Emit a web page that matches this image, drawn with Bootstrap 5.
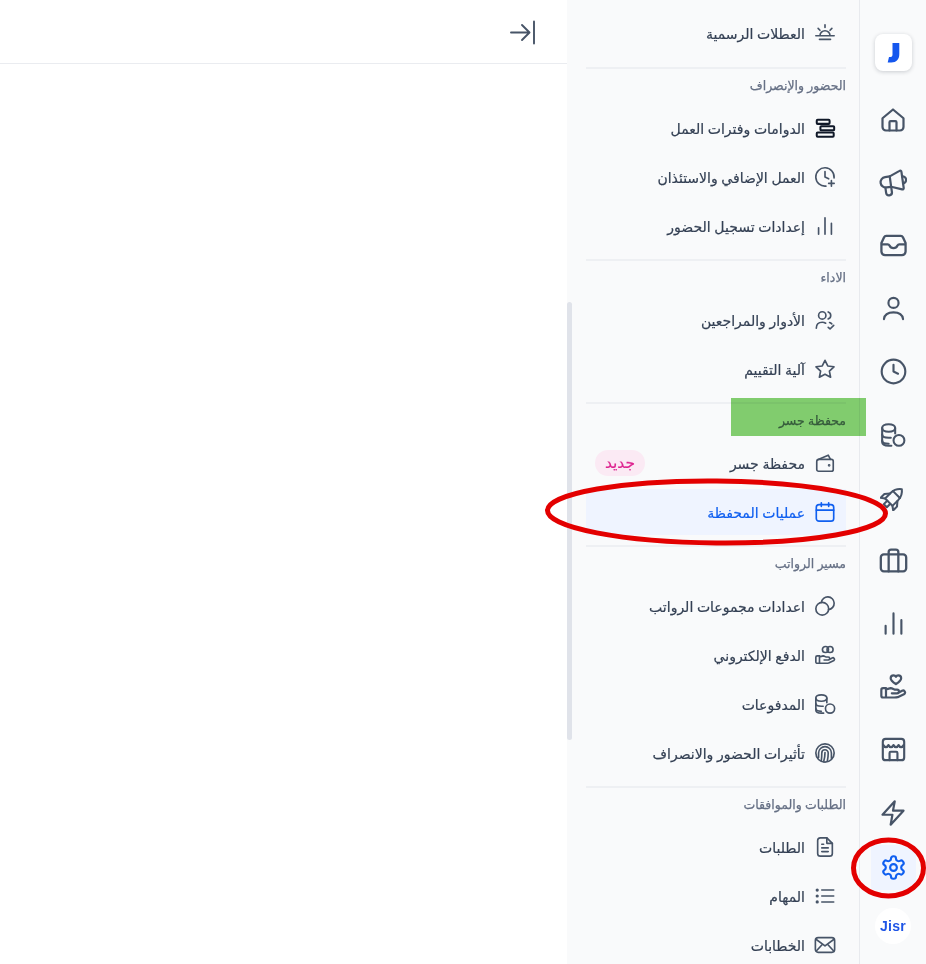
<!DOCTYPE html>
<html lang="ar" dir="rtl">
<head>
<meta charset="utf-8">
<title>الإعدادات</title>
<link href="https://cdn.jsdelivr.net/npm/bootstrap@5.3.0/dist/css/bootstrap.min.css" rel="stylesheet">
<style>
html,body{height:964px;overflow:hidden;background:#fff}
body{font-family:"Noto Sans","DejaVu Sans","Liberation Sans",sans-serif;color:#344054}
.stage{position:relative;width:926px;height:964px;overflow:hidden}
.ico{fill:none;stroke:currentColor;stroke-width:1.9;stroke-linecap:round;stroke-linejoin:round;flex:none}
.rail{width:67px;flex:none;background:#f9fafb;border-left:1px solid #e8eaee;color:#475467}
.rail-logo{width:37px;height:37px;margin-top:34px;margin-bottom:26px;background:#fff;border-radius:8px;box-shadow:0 1px 4px rgba(16,24,40,.2)}
.rail-list{gap:18px}
.rail-btn{width:45px;height:45px;color:#475467}
.rail-btn.on{background:#eff4ff;color:#0f5ff0;margin-top:-8px;border-radius:4px}
.rail-jisr{width:36px;height:36px;margin-top:18px;background:#fff;color:#1f55e6;font:800 14px/1 "Liberation Sans",sans-serif;letter-spacing:.3px}
.panel{width:292px;flex:none;background:#f9fafb;padding:10px 13px 0 19px;position:relative;overflow:hidden}
.thumb{position:absolute;left:0;top:302px;width:5px;height:438px;background:#e0e3ea;border-radius:3px}
.row-item{height:46px;margin-bottom:3px;padding:0 10px 0 9px;gap:9px;font-size:14px;color:#344054;-webkit-text-stroke:.2px currentColor}
.row-item .ico{stroke-width:1.8;color:#475467}
.row-item.on{background:#eff4ff;color:#0f5ff0}
.row-item.on .ico{color:#0f5ff0}
.row-item .ico.dark-ico{color:#101828;stroke-width:2.2}
.sep{height:2px;background:#eef0f3;margin:10px 0 0}
.sep.first-sep{margin-top:11px}
.sec-label{height:36px;font-size:12.5px;color:#667085;line-height:34px;-webkit-text-stroke:.25px currentColor}
.tag-new{width:50px;height:26px;background:#fbeaf4;color:#dd2590;font-size:15.5px;border-radius:13px}
.main-area{flex:1;min-width:0;background:#fff}
.topbar{height:64px;border-bottom:1px solid #eaecf0;color:#475467;padding-right:31px}
.mark-green{position:absolute;left:731px;top:398px;width:135px;height:38px;background:#84d070;mix-blend-mode:multiply}
.mark-ring{position:absolute;left:0;top:0;pointer-events:none}
</style>
</head>
<body>
<svg width="0" height="0" class="d-none">
<defs>
<symbol id="i-home" viewBox="0 0 24 24"><path d="M3 10.500 12 3l9 7.500V18a3 3 0 0 1-3 3H6a3 3 0 0 1-3-3z"/><path d="M9 21v-7a1 1 0 0 1 1-1h4a1 1 0 0 1 1 1v7"/></symbol>
<symbol id="i-mega" viewBox="0 0 24 24"><g transform="rotate(-8 12 12)"><path d="M10 6H6a4.500 4.500 0 0 0 0 9h4"/><path d="M10 6 19 2.500c.7-.3 1.500.2 1.500 1v14c0 .8-.8 1.300-1.500 1L10 15z"/><path d="M20.500 7.500a3 3 0 0 1 0 6M5 15v4.500a2.500 2.500 0 0 0 5 0V15"/></g></symbol>
<symbol id="i-inbox" viewBox="0 0 24 24"><path d="M6 4h12a2 2 0 0 1 1.800 1.100L22 10v7a3 3 0 0 1-3 3H5a3 3 0 0 1-3-3v-7l2.200-4.900A2 2 0 0 1 6 4z"/><path d="M2.500 11h4.700c.7 0 1.200.4 1.500 1a3.600 3.600 0 0 0 6.600 0c.3-.6.8-1 1.500-1h4.700"/></symbol>
<symbol id="i-user" viewBox="0 0 24 24"><circle cx="12" cy="7" r="4.500"/><path d="M3.500 21.500c.5-4 3-6 8.500-6s8 2 8.500 6"/></symbol>
<symbol id="i-clock" viewBox="0 0 24 24"><circle cx="12" cy="12" r="10.500"/><path d="M12 6v6l4 2"/></symbol>
<symbol id="i-coins" viewBox="0 0 24 24"><path d="M14 10.500V5.500C14 3.500 12 2 8 2S2 3.500 2 5.500v13C2 20.500 4 22 8 22h2.500"/><path d="M2 5.500C2 7.500 4 9 8 9s6-1.500 6-3.500M2 11.500c0 2 2 3 6 3h2M2 17c0 2 2 3 6 3"/><circle cx="17.500" cy="17" r="5"/></symbol>
<symbol id="i-rocket" viewBox="0 0 24 24"><g transform="rotate(45 12 12)"><path d="M12 .5c3.200 2.500 4.800 5.500 4.800 9.500v7.500H7.200V10C7.200 6 8.800 3 12 .5z"/><path d="M7.200 11 3.800 15v5l3.400-2.500M16.800 11l3.400 4v5l-3.400-2.500M10 17.500V22h4v-4.500M7.500 7.500h9"/></g></symbol>
<symbol id="i-case" viewBox="0 0 24 24"><rect x="1.500" y="7" width="21" height="14" rx="2.500"/><path d="M8 21V5a2 2 0 0 1 2-2h4a2 2 0 0 1 2 2v16"/></symbol>
<symbol id="i-bars" viewBox="0 0 24 24"><path d="M12 3v18M5 14v7M19 9v12"/></symbol>
<symbol id="i-hand" viewBox="0 0 24 24"><path d="M6 21H3.500A1.500 1.500 0 0 1 2 19.500v-5A1.500 1.500 0 0 1 3.500 13H6zM6 14l4-1c1.200 0 2.200.8 3.200 1.200h2.300a1.600 1.600 0 0 1 0 3.200H11m4.800 0 4-2.200a1.700 1.700 0 0 1 2 2.700L16 20.700c-1 .3-2 .3-3 .3H6"/><path d="M16.500 2c-1 0-1.700.5-2 1.200C14.200 2.500 13.500 2 12.500 2 11 2 10 3.100 10 4.500c0 2.100 2.500 3.700 4.500 5 2-1.300 4.500-2.900 4.500-5C19 3.100 18 2 16.500 2z"/></symbol>
<symbol id="i-pay" viewBox="0 0 24 24"><path d="M6 21H3.500A1.500 1.500 0 0 1 2 19.500v-5A1.500 1.500 0 0 1 3.500 13H6zM6 14l4-1c1.200 0 2.200.8 3.200 1.200h2.300a1.600 1.600 0 0 1 0 3.200H11m4.800 0 4-2.200a1.700 1.700 0 0 1 2 2.700L16 20.700c-1 .3-2 .3-3 .3H6"/><circle cx="12.500" cy="6" r="3.300"/><circle cx="17.500" cy="6" r="3.300"/></symbol>
<symbol id="i-store" viewBox="0 0 24 24"><rect x="2.500" y="2.500" width="19" height="19" rx="2.500"/><path d="M3 8c1 2.500 3.500 2.500 4.500 0 1 2.500 3.500 2.500 4.500 0 1 2.500 3.500 2.500 4.500 0 1 2.500 3.500 2.500 4.500 0M8.500 21.500V15a1 1 0 0 1 1-1h5a1 1 0 0 1 1 1v6.500"/></symbol>
<symbol id="i-bolt" viewBox="0 0 24 24"><path d="M13.500 2 3 13.500h8.500L10 22l11-12h-9z"/></symbol>
<symbol id="i-gear" viewBox="0 0 24 24"><path d="M12.220 2h-.44a2 2 0 0 0-2 2v.18a2 2 0 0 1-1 1.730l-.43.25a2 2 0 0 1-2 0l-.15-.08a2 2 0 0 0-2.730.73l-.22.38a2 2 0 0 0 .73 2.730l.15.1a2 2 0 0 1 1 1.720v.51a2 2 0 0 1-1 1.740l-.15.09a2 2 0 0 0-.73 2.730l.22.38a2 2 0 0 0 2.730.73l.15-.08a2 2 0 0 1 2 0l.43.25a2 2 0 0 1 1 1.730V20a2 2 0 0 0 2 2h.44a2 2 0 0 0 2-2v-.18a2 2 0 0 1 1-1.730l.43-.25a2 2 0 0 1 2 0l.15.08a2 2 0 0 0 2.730-.73l.22-.39a2 2 0 0 0-.73-2.730l-.15-.08a2 2 0 0 1-1-1.740v-.5a2 2 0 0 1 1-1.740l.15-.09a2 2 0 0 0 .73-2.730l-.22-.38a2 2 0 0 0-2.730-.73l-.15.08a2 2 0 0 1-2 0l-.43-.25a2 2 0 0 1-1-1.730V4a2 2 0 0 0-2-2z"/><circle cx="12" cy="12" r="3"/></symbol>
<symbol id="i-sun" viewBox="0 0 24 24"><path d="M6.500 15a5.500 5.500 0 0 1 11 0M2 15h20M6 19h12M12 3v3M4.500 7l2 2M19.500 7l-2 2"/></symbol>
<symbol id="i-shift" viewBox="0 0 24 24"><rect x="3" y="3" width="14" height="4.500" rx="1"/><rect x="7" y="10" width="15" height="4.500" rx="1"/><rect x="3" y="17" width="18.500" height="4.500" rx="1"/></symbol>
<symbol id="i-clockplus" viewBox="0 0 24 24"><path d="M13 21.900A10 10 0 1 1 21.900 13M12 6v6l4 2M19 16v6M16 19h6"/></symbol>
<symbol id="i-users" viewBox="0 0 24 24"><circle cx="9" cy="7" r="4"/><path d="M2.500 21c0-4 2.500-6.500 6.500-6.500 1.500 0 2.700.3 3.700 1M15.500 3.200a4 4 0 0 1 0 7.600M17 14.800c.9.300 1.700.8 2.400 1.400M15.500 20l2 1.800 4-4"/></symbol>
<symbol id="i-star" viewBox="0 0 24 24"><path d="m12 2.500 3 6.200 6.800.9-5 4.700 1.300 6.700-6.100-3.300-6.100 3.300 1.300-6.700-5-4.700 6.800-.9z"/></symbol>
<symbol id="i-wallet" viewBox="0 0 24 24"><path d="M4 8.500 15.500 3.500 18 8"/><path d="M3 10.500A2.500 2.500 0 0 1 5.500 8H19a2 2 0 0 1 2 2v9a2 2 0 0 1-2 2H5a2 2 0 0 1-2-2z"/><circle cx="16.500" cy="14.500" r=".6"/></symbol>
<symbol id="i-cal" viewBox="0 0 24 24"><rect x="2.500" y="4" width="19" height="18" rx="3"/><path d="M2.500 10h19M8 2v4M16 2v4"/></symbol>
<symbol id="i-rings" viewBox="0 0 24 24"><circle cx="9" cy="15" r="7"/><path d="M8.060 8.060A7 7 0 1 1 15.940 15.940"/></symbol>
<symbol id="i-finger" viewBox="0 0 24 24"><circle cx="12" cy="12" r="10"/><path d="M5 17v-5a7 7 0 0 1 14 0v6M8 20c.4-2.500.5-5 .5-8a3.500 3.500 0 0 1 7 0c0 3-.3 6-1 9M12 11.500c0 4-.5 7-1.500 10"/></symbol>
<symbol id="i-file" viewBox="0 0 24 24"><path d="M14 2H7a3 3 0 0 0-3 3v14a3 3 0 0 0 3 3h10a3 3 0 0 0 3-3V8z"/><path d="M14 2v6h6M8.500 13h7M8.500 17h7M8.500 9h2"/></symbol>
<symbol id="i-list" viewBox="0 0 24 24"><path d="M8.500 5.500h13M8.500 12h13M8.500 18.500h13"/><path stroke-width="3.500" d="M3.500 5.500h.01M3.500 12h.01M3.500 18.500h.01"/></symbol>
<symbol id="i-mail" viewBox="0 0 24 24"><rect x="1.500" y="4" width="21" height="16" rx="3"/><path d="m2.500 6 9.500 7 9.500-7M2.500 18.500 9 11.500M21.500 18.500 15 11.500"/></symbol>
</defs>
</svg>

<div class="stage d-flex">
  <nav class="rail d-flex flex-column align-items-center">
    <div class="rail-logo d-flex align-items-center justify-content-center">
      <svg width="14" height="20" viewBox="0 0 14 20"><path fill="#1557ee" d="M6.500 0h6.800v11c0 5.500-3 8.500-8 8.500H1.700L3 14h1.500c1.300 0 2-.8 2-2.500z"/></svg>
    </div>
    <div class="rail-list d-flex flex-column align-items-center">
      <a class="rail-btn d-flex align-items-center justify-content-center"><svg class="ico" width="28" height="28"><use href="#i-home"/></svg></a>
      <a class="rail-btn d-flex align-items-center justify-content-center"><svg class="ico" width="28" height="28"><use href="#i-mega"/></svg></a>
      <a class="rail-btn d-flex align-items-center justify-content-center"><svg class="ico" width="29" height="29"><use href="#i-inbox"/></svg></a>
      <a class="rail-btn d-flex align-items-center justify-content-center"><svg class="ico" width="27" height="27"><use href="#i-user"/></svg></a>
      <a class="rail-btn d-flex align-items-center justify-content-center"><svg class="ico" width="27" height="27"><use href="#i-clock"/></svg></a>
      <a class="rail-btn d-flex align-items-center justify-content-center"><svg class="ico" width="26" height="26"><use href="#i-coins"/></svg></a>
      <a class="rail-btn d-flex align-items-center justify-content-center"><svg class="ico" width="26" height="26"><use href="#i-rocket"/></svg></a>
      <a class="rail-btn d-flex align-items-center justify-content-center"><svg class="ico" width="29" height="29"><use href="#i-case"/></svg></a>
      <a class="rail-btn d-flex align-items-center justify-content-center"><svg class="ico" width="27" height="27"><use href="#i-bars"/></svg></a>
      <a class="rail-btn d-flex align-items-center justify-content-center"><svg class="ico" width="28" height="28"><use href="#i-hand"/></svg></a>
      <a class="rail-btn d-flex align-items-center justify-content-center"><svg class="ico" width="27" height="27"><use href="#i-store"/></svg></a>
      <a class="rail-btn d-flex align-items-center justify-content-center"><svg class="ico" width="28" height="28"><use href="#i-bolt"/></svg></a>
      <a class="rail-btn on d-flex align-items-center justify-content-center"><svg class="ico" width="27" height="27"><use href="#i-gear"/></svg></a>
    </div>
    <div class="rail-jisr rounded-circle d-flex align-items-center justify-content-center" dir="ltr">Jisr</div>
  </nav>

  <aside class="panel">
    <div class="thumb"></div>
    <div class="row-item d-flex align-items-center"><svg class="ico" width="22" height="22"><use href="#i-sun"/></svg><span>العطلات الرسمية</span></div>
    <div class="sep first-sep"></div>
    <div class="sec-label">الحضور والإنصراف</div>
    <div class="row-item d-flex align-items-center"><svg class="ico dark-ico" width="22" height="22"><use href="#i-shift"/></svg><span>الدوامات وفترات العمل</span></div>
    <div class="row-item d-flex align-items-center"><svg class="ico" width="22" height="22"><use href="#i-clockplus"/></svg><span>العمل الإضافي والاستئذان</span></div>
    <div class="row-item d-flex align-items-center"><svg class="ico" width="22" height="22"><use href="#i-bars"/></svg><span>إعدادات تسجيل الحضور</span></div>
    <div class="sep"></div>
    <div class="sec-label">الاداء</div>
    <div class="row-item d-flex align-items-center"><svg class="ico" width="22" height="22"><use href="#i-users"/></svg><span>الأدوار والمراجعين</span></div>
    <div class="row-item d-flex align-items-center"><svg class="ico" width="22" height="22"><use href="#i-star"/></svg><span>آلية التقييم</span></div>
    <div class="sep"></div>
    <div class="sec-label">محفظة جسر</div>
    <div class="row-item d-flex align-items-center"><svg class="ico" width="22" height="22"><use href="#i-wallet"/></svg><span>محفظة جسر</span><span class="tag-new me-auto d-flex align-items-center justify-content-center">جديد</span></div>
    <div class="row-item on d-flex align-items-center"><svg class="ico" width="22" height="22"><use href="#i-cal"/></svg><span>عمليات المحفظة</span></div>
    <div class="sep"></div>
    <div class="sec-label">مسير الرواتب</div>
    <div class="row-item d-flex align-items-center"><svg class="ico" width="22" height="22"><use href="#i-rings"/></svg><span>اعدادات مجموعات الرواتب</span></div>
    <div class="row-item d-flex align-items-center"><svg class="ico" width="22" height="22"><use href="#i-pay"/></svg><span>الدفع الإلكتروني</span></div>
    <div class="row-item d-flex align-items-center"><svg class="ico" width="22" height="22"><use href="#i-coins"/></svg><span>المدفوعات</span></div>
    <div class="row-item d-flex align-items-center"><svg class="ico" width="22" height="22"><use href="#i-finger"/></svg><span>تأثيرات الحضور والانصراف</span></div>
    <div class="sep"></div>
    <div class="sec-label">الطلبات والموافقات</div>
    <div class="row-item d-flex align-items-center"><svg class="ico" width="22" height="22"><use href="#i-file"/></svg><span>الطلبات</span></div>
    <div class="row-item d-flex align-items-center"><svg class="ico" width="22" height="22"><use href="#i-list"/></svg><span>المهام</span></div>
    <div class="row-item d-flex align-items-center"><svg class="ico" width="22" height="22"><use href="#i-mail"/></svg><span>الخطابات</span></div>
  </aside>

  <main class="main-area">
    <div class="topbar d-flex align-items-center justify-content-start">
      <svg class="ico" width="26" height="26" viewBox="0 0 26 26"><path d="M1 13.500h18M12 6l7.500 7.500L12 21M24 2.500v22"/></svg>
    </div>
  </main>

  <div class="mark-green"></div>
  <svg class="mark-ring" width="926" height="964" fill="none" stroke="#e30000" stroke-width="5">
    <ellipse cx="716.500" cy="512" rx="169" ry="31" transform="rotate(0.500 716 512)"/>
    <ellipse cx="888.500" cy="868" rx="35" ry="28"/>
  </svg>
</div>
<script src="https://cdn.jsdelivr.net/npm/bootstrap@5.3.0/dist/js/bootstrap.bundle.min.js"></script>
</body>
</html>
